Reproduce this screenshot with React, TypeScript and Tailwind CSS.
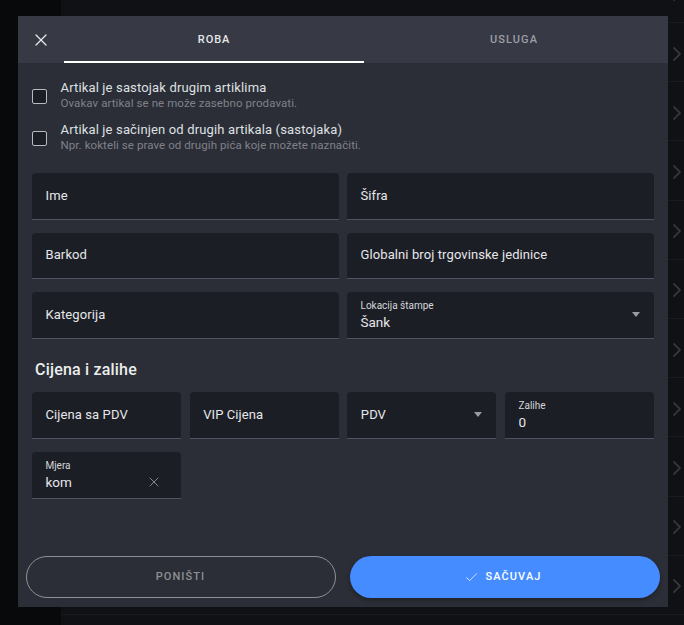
import { X, Check, ChevronRight } from "lucide-react";

const font = "font-['Roboto','Inter',sans-serif]";

function Field({ label }: { label: string }) {
  return (
    <div className="flex h-[46.5px] items-center rounded-t-[4px] border-b border-[#50535f] bg-[#1c1e25] pb-[1px] pl-[13.5px] text-[13px] tracking-[0.1px] text-[#e6e7ea]">
      {label}
    </div>
  );
}

function Filled({ label, value, trailing }: { label: string; value: string; trailing?: React.ReactNode }) {
  return (
    <div className="relative flex h-[46.5px] flex-col rounded-t-[4px] border-b border-[#50535f] bg-[#1c1e25] pl-[13.5px] pt-[7px]">
      <span className="text-[10px] leading-[13px] text-[#d5d6da]">{label}</span>
      <span className="text-[13.5px] leading-[20px] text-[#e6e7ea]">{value}</span>
      {trailing}
    </div>
  );
}

function Caret() {
  return <span className="absolute right-[14px] top-[20px] h-0 w-0 border-x-[4.5px] border-t-[5px] border-x-transparent border-t-[#9b9ca1]" />;
}

function SelectField({ label }: { label: string }) {
  return (
    <div className="relative">
      <Field label={label} />
      <Caret />
    </div>
  );
}

function CheckRow({ title, hint }: { title: string; hint: string }) {
  return (
    <div className="flex items-start">
      <span className="ml-[14px] mt-[11px] h-[15px] w-[15px] rounded-[2px] border border-[#b9bac0] bg-[#1c1e25]" />
      <div className="ml-[13.5px]">
        <div className="pt-[1px] text-[13px] leading-[17px] tracking-[0.15px] text-[#dfe0e3]">{title}</div>
        <div className="text-[11.5px] leading-[15px] tracking-[0.08px] text-[#7f818a]">{hint}</div>
      </div>
    </div>
  );
}

export default function App() {
  const rows = Array.from({ length: 12 });
  return (
    <div className={`relative h-[625px] w-[684px] overflow-hidden bg-[#101115] ${font}`}>
      <div className="flex h-full">
        <div className="w-[61px] shrink-0 bg-[#08090b]" />
        <div className="-mt-[36.2px] flex-1">
          {rows.map((_, i) => (
            <div key={i} className="flex h-[59.2px] items-center justify-end border-b border-[#1a1b20]">
              <ChevronRight className="mr-[-5px] mt-[3px] h-[24px] w-[24px] text-[#33353b]" strokeWidth={1.8} />
            </div>
          ))}
        </div>
      </div>

      <div className="absolute left-[18px] top-[16px] flex h-[591px] w-[650px] flex-col bg-[#2b2e36] text-white">
        <div className="flex h-[47px] shrink-0 bg-[#373a45]">
          <div className="flex w-[46px] items-center justify-center">
            <X className="h-[20px] w-[20px] text-[#e8e9eb]" strokeWidth={1.5} />
          </div>
          <div className="relative flex w-[300px] items-center justify-center pt-[1px] text-[11px] font-medium tracking-[0.9px] text-[#e6e7ea]">
            ROBA
            <span className="absolute inset-x-0 bottom-0 h-[2px] bg-white" />
          </div>
          <div className="flex flex-1 items-center justify-center pr-[4px] pt-[1px] text-[11px] font-medium tracking-[1.1px] text-[#9c9ea6]">USLUGA</div>
        </div>

        <div className="mt-[15px] flex flex-col gap-[9px]">
          <CheckRow title="Artikal je sastojak drugim artiklima" hint="Ovakav artikal se ne može zasebno prodavati." />
          <CheckRow title="Artikal je sačinjen od drugih artikala (sastojaka)" hint="Npr. kokteli se prave od drugih pića koje možete naznačiti." />
        </div>

        <div className="mx-[14px] mt-[20px] grid grid-cols-2 gap-x-[8px] gap-y-[13px]">
          <Field label="Ime" />
          <Field label="Šifra" />
          <Field label="Barkod" />
          <Field label="Globalni broj trgovinske jedinice" />
          <Field label="Kategorija" />
          <Filled label="Lokacija štampe" value="Šank" trailing={<Caret />} />
        </div>

        <h2 className="ml-[17px] mt-[19px] text-[16px] font-medium leading-[24px] tracking-[0.2px] text-[#eceded]">Cijena i zalihe</h2>

        <div className="mx-[14px] mt-[10.5px] grid grid-cols-4 gap-x-[8.67px] gap-y-[13.5px]">
          <Field label="Cijena sa PDV" />
          <Field label="VIP Cijena" />
          <SelectField label="PDV" />
          <Filled label="Zalihe" value="0" />
          <Filled
            label="Mjera"
            value="kom"
            trailing={<X className="absolute right-[19px] top-[22px] h-[16px] w-[16px] text-[#85878e]" strokeWidth={1.5} />}
          />
        </div>

        <div className="mb-[9px] mt-auto flex gap-[14px] px-[8px]">
          <button className="h-[42px] w-[310px] shrink-0 rounded-full border border-[#8f9095] pr-[1px] text-[11px] font-medium tracking-[1.1px] text-[#8f9095]">PONIŠTI</button>
          <button className="flex h-[42px] w-[310px] shrink-0 items-center justify-center gap-[6px] rounded-full bg-[#448cff] pr-[4px] text-[11px] font-medium tracking-[1.1px] text-white shadow-[0_2px_4px_rgba(0,0,0,0.3)]">
            <Check className="h-[15px] w-[15px]" strokeWidth={1.2} />
            SAČUVAJ
          </button>
        </div>
      </div>
    </div>
  );
}
